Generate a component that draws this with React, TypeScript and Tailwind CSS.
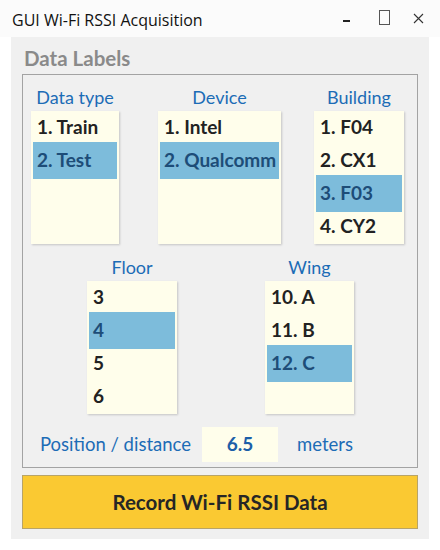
import React from "react";

type ListProps = { items: string[]; selected: number; width: string };

const LIST_BG = "bg-[#fffeeb]";

function ListBox({ items, selected, width }: { items: string[]; selected: number; width: string }) {
  return (
    <div className={`${width} h-[133px] ${LIST_BG} shadow-[1px_1px_2px_rgba(0,0,0,0.18)] flex flex-col`}>
      {items.map((it, i) =>
        i === selected ? (
          <div
            key={i}
            className="h-[37px] my-[-2px] mx-[2px] bg-[#7dbcdb] flex items-center pl-[4px] text-[19px] font-bold text-[#1d4d78] relative whitespace-nowrap"
          >
            {it}
          </div>
        ) : (
          <div key={i} className="h-[33px] flex items-center pl-[6px] text-[19px] font-bold text-[#222222] whitespace-nowrap">
            {it}
          </div>
        )
      )}
    </div>
  );
}

function Column({
  label,
  items,
  selected,
  width,
  className = "",
}: ListProps & { label: string; className?: string }) {
  return (
    <div className={`flex flex-col items-center ${className}`}>
      <div className="h-[24px] text-[18px] leading-[24px] text-[#1c6cb6] -mt-[2px] mb-[2px] whitespace-nowrap">{label}</div>
      <ListBox items={items} selected={selected} width={width} />
    </div>
  );
}

export default function App() {
  return (
    <div
      className="w-[440px] h-[550px] bg-white overflow-hidden"
      style={{ fontFamily: "Lato, 'Open Sans', sans-serif" }}
    >
      {/* Title bar */}
      <div className="h-[37px] bg-[#fbfbfb] flex items-center pl-[12px] pt-[3px] relative" style={{ fontFamily: "'Open Sans', sans-serif" }}>
        <span className="text-[16px] text-[#111]">GUI Wi-Fi RSSI Acquisition</span>
        <div className="ml-auto flex items-center h-full">
          <div className="w-[7px] h-[2px] bg-[#222] mr-[29px] mt-[2px]" />
          <div className="w-[11px] h-[15px] border border-[#555] mr-[23px] -mt-[6px]" />
          <svg width="11" height="11" viewBox="0 0 11 11" className="mr-[16px] -mt-[3px]">
            <path d="M1 1 L10 10 M10 1 L1 10" stroke="#333" strokeWidth="1.1" />
          </svg>
        </div>
      </div>

      {/* Main panel */}
      <div className="mx-[11px] h-[502px] bg-[#f0f0f0] px-[11px] pt-[9px]">
        <div className="h-[28px] text-[20.5px] font-bold text-[#8a8a8a] leading-[24px] pl-[2px]">Data Labels</div>
        <div className="h-[394px] border border-[#a3a3a3] pt-[12px]">
          <div className="flex pl-[8px]">
            <Column label="Data type" items={["1. Train", "2. Test"]} selected={1} width="w-[88px]" />
            <Column
              label="Device"
              items={["1. Intel", "2. Qualcomm"]}
              selected={1}
              width="w-[123px]"
              className="ml-[39px]"
            />
            <Column
              label="Building"
              items={["1. F04", "2. CX1", "3. F03", "4. CY2"]}
              selected={2}
              width="w-[90px]"
              className="ml-[33px]"
            />
          </div>
          <div className="flex pl-[64px] mt-[13px]">
            <Column label="Floor" items={["3", "4", "5", "6"]} selected={1} width="w-[90px]" />
            <Column
              label="Wing"
              items={["10. A", "11. B", "12. C"]}
              selected={2}
              width="w-[89px]"
              className="ml-[88px]"
            />
          </div>
          <div className="flex items-center mt-[13px] pl-[17px] h-[35px]">
            <span className="text-[18.5px] text-[#1c6cb6] w-[162px] whitespace-nowrap">Position / distance</span>
            <div className={`w-[76px] h-[35px] ${LIST_BG} flex items-center justify-center text-[19px] font-bold text-[#1c5fa8]`}>
              6.5
            </div>
            <span className="text-[18.5px] text-[#1c6cb6] ml-[19px]">meters</span>
          </div>
        </div>
        <div className="mt-[7px] h-[54px] bg-[#fac932] border border-[#b8a468] flex items-center justify-center text-[20.5px] font-bold text-[#262626]">
          Record Wi-Fi RSSI Data
        </div>
      </div>
    </div>
  );
}
